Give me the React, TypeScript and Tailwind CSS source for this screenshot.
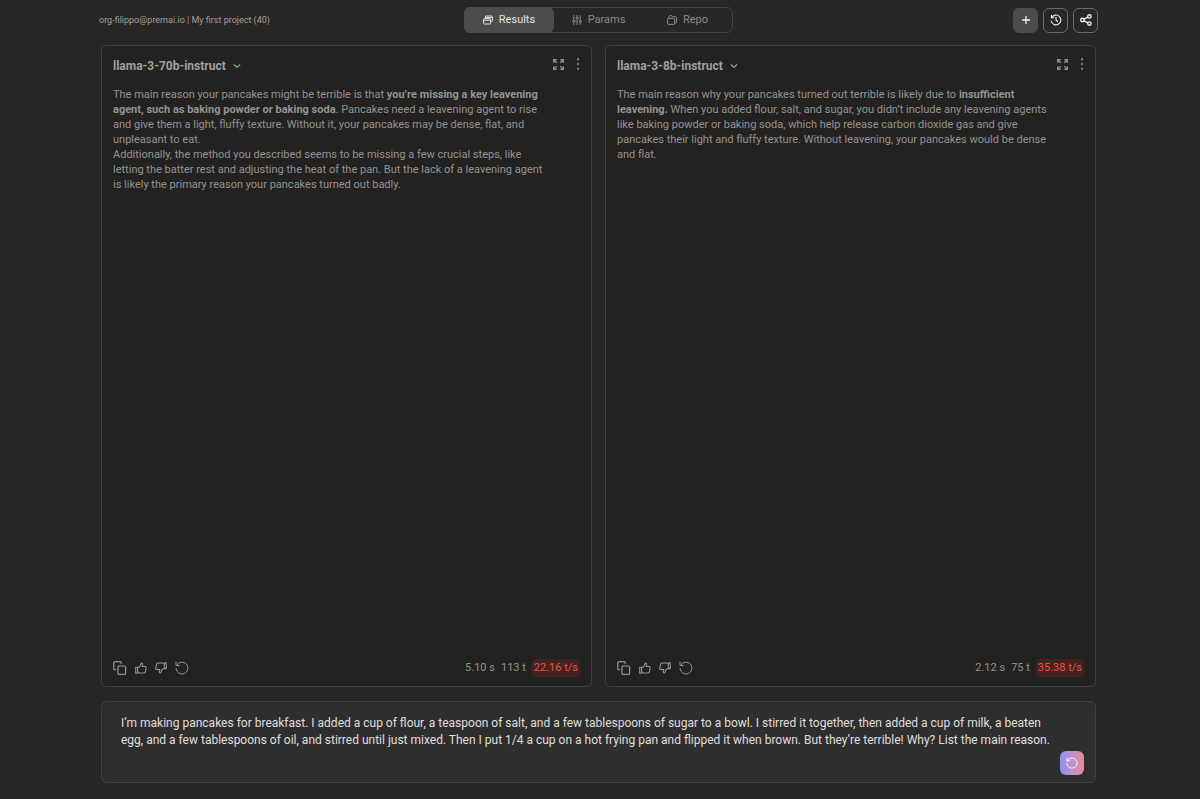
import type { ReactNode } from "react";

type IconProps = { className?: string };

function WindowsIcon({ className }: IconProps) {
  return (
    <svg viewBox="0 0 10 10" fill="none" stroke="currentColor" strokeLinejoin="round" className={className}>
      <path d="M2.4 3V1.9a.9.9 0 0 1 .9-.9h5.2a.9.9 0 0 1 .9.9v3.7a.9.9 0 0 1-.9.9h-.8" />
      <path d="M2.4 2.4h7" />
      <rect x=".6" y="3.6" width="7" height="5.4" rx=".9" />
      <path d="M.6 5.2h7" />
    </svg>
  );
}

function SlidersIcon({ className }: IconProps) {
  return (
    <svg viewBox="0 0 10 10" fill="none" stroke="currentColor" strokeLinecap="round" className={className}>
      <path d="M1.8.5v4M1.8 8v1.5M5 .5v1M5 5v4.5M8.2.5v4M8.2 8v1.5" />
      <circle cx="1.8" cy="6.3" r="1.1" />
      <circle cx="5" cy="3.1" r="1.1" />
      <circle cx="8.2" cy="6.3" r="1.1" />
    </svg>
  );
}

function FolderIcon({ className }: IconProps) {
  return (
    <svg viewBox="0 0 10 10" fill="none" stroke="currentColor" strokeLinejoin="round" className={className}>
      <path d="M.6 8.5V4.1a.8.8 0 0 1 .8-.8h5.4a.8.8 0 0 1 .8.8v4.4a.9.9 0 0 1-.9.9H1.5a.9.9 0 0 1-.9-.9Z" />
      <path d="M2 3.2V1.4a.8.8 0 0 1 .8-.8h1.6l1 1.1h3.1a.9.9 0 0 1 .9.9v4.6a.9.9 0 0 1-.9.9h-.8" />
    </svg>
  );
}

function PlusIcon({ className }: IconProps) {
  return (
    <svg viewBox="0 0 10 10" fill="none" stroke="currentColor" strokeWidth="1.3" className={className}>
      <path d="M5 1v8M1 5h8" />
    </svg>
  );
}

function HistoryIcon({ className }: IconProps) {
  return (
    <svg viewBox="0 0 12 12" fill="none" stroke="currentColor" strokeWidth="1.1" strokeLinecap="round" strokeLinejoin="round" className={className}>
      <path d="M1.5 1.4v2.4h2.4" />
      <path d="M1.7 3.6A4.9 4.9 0 1 1 1.2 7" />
      <path d="M6 3.4V6l1.6 1.6" />
    </svg>
  );
}

function ShareIcon({ className }: IconProps) {
  return (
    <svg viewBox="0 0 12 12" fill="none" stroke="currentColor" strokeWidth="1.4" className={className}>
      <circle cx="2.4" cy="6" r="1.7" />
      <circle cx="9.4" cy="2.4" r="1.7" />
      <circle cx="9.4" cy="9.6" r="1.7" />
      <path d="M4 5.2l3.9-2M4 6.8l3.9 2" />
    </svg>
  );
}

function ExpandIcon({ className }: IconProps) {
  return (
    <svg viewBox="0 0 12 12" fill="none" stroke="currentColor" strokeWidth="1.3" className={className}>
      <path d="M.7 4V.7H4M.7.7l3.4 3.4M8 .7h3.3V4M11.3.7L7.9 4.1M.7 8v3.3H4M.7 11.3l3.4-3.4M8 11.3h3.3V8M11.3 11.3L7.9 7.9" />
    </svg>
  );
}

function DotsIcon({ className }: IconProps) {
  return (
    <svg viewBox="0 0 12 12" fill="currentColor" className={className}>
      <circle cx="6" cy="1.2" r="1.1" />
      <circle cx="6" cy="6" r="1.1" />
      <circle cx="6" cy="10.8" r="1.1" />
    </svg>
  );
}

function ChevronIcon({ className }: IconProps) {
  return (
    <svg viewBox="0 0 10 10" fill="none" stroke="currentColor" strokeWidth="1.2" strokeLinecap="round" strokeLinejoin="round" className={className}>
      <path d="M2.2 3.8L5 6.4l2.8-2.6" />
    </svg>
  );
}

function CopyIcon({ className }: IconProps) {
  return (
    <svg viewBox="0 0 14 14" fill="none" stroke="currentColor" strokeWidth="1.2" strokeLinejoin="round" className={className}>
      <rect x="5" y="5" width="7.6" height="8.4" rx=".8" />
      <path d="M3 8.6H1.7a.9.9 0 0 1-.9-.9V1.6a.9.9 0 0 1 .9-.9h5.6a.9.9 0 0 1 .9.9V3" />
    </svg>
  );
}

function ThumbIcon({ className }: IconProps) {
  return (
    <svg viewBox="0 0 12 12" fill="none" stroke="currentColor" strokeWidth="1.1" strokeLinejoin="round" className={className}>
      <path d="M.7 5.4h1.9v5.8H.7z" />
      <path d="M2.6 5.9L5 4.2l1-2.6c.3-.7 1.7-.5 1.7.6l-.4 2.3h2.9c.7 0 1.1.5 1 1.2l-.8 4.2c-.1.7-.6 1.1-1.3 1.1H5l-2.4-1" />
    </svg>
  );
}

function RedoIcon({ className }: IconProps) {
  return (
    <svg viewBox="0 0 14 14" fill="none" stroke="currentColor" strokeLinecap="round" strokeLinejoin="round" className={className}>
      <path d="M1 1.2v3.4h3.4" />
      <path d="M1.6 4.4A6 6 0 1 1 1 7.6" />
    </svg>
  );
}

type Result = {
  model: string;
  time: string;
  tokens: string;
  speed: string;
  text: ReactNode;
};

const results: Result[] = [
  {
    model: "llama-3-70b-instruct",
    time: "5.10 s",
    tokens: "113 t",
    speed: "22.16 t/s",
    text: (
      <>
        <p>
          The main reason your pancakes might be terrible is that{" "}
          <strong className="font-bold">
            you’re missing a key leavening
            <br />
            agent, such as baking powder or baking soda
          </strong>
          . Pancakes need a leavening agent to rise
          <br />
          and give them a light, fluffy texture. Without it, your pancakes may be dense, flat, and
          <br />
          unpleasant to eat.
        </p>
        <p>
          Additionally, the method you described seems to be missing a few crucial steps, like
          <br />
          letting the batter rest and adjusting the heat of the pan. But the lack of a leavening agent
          <br />
          is likely the primary reason your pancakes turned out badly.
        </p>
      </>
    ),
  },
  {
    model: "llama-3-8b-instruct",
    time: "2.12 s",
    tokens: "75 t",
    speed: "35.38 t/s",
    text: (
      <p>
        The main reason why your pancakes turned out terrible is likely due to{" "}
        <strong className="font-bold">
          insufficient
          <br />
          leavening.
        </strong>{" "}
        When you added flour, salt, and sugar, you didn’t include any leavening agents
        <br />
        like baking powder or baking soda, which help release carbon dioxide gas and give
        <br />
        pancakes their light and fluffy texture. Without leavening, your pancakes would be dense
        <br />
        and flat.
      </p>
    ),
  },
];

const prompt =
  "I’m making pancakes for breakfast. I added a cup of flour, a teaspoon of salt, and a few tablespoons of sugar to a bowl. I stirred it together, then added a cup of milk, a beaten egg, and a few tablespoons of oil, and stirred until just mixed. Then I put 1/4 a cup on a hot frying pan and flipped it when brown. But they’re terrible! Why? List the main reason.";

function Header() {
  return (
    <header className="grid h-[26px] grid-cols-[1fr_auto_1fr] items-center">
      <p className="pt-px text-[9px] text-[#a09f9e]">org-filippo@premai.io | My first project (40)</p>
      <nav className="flex h-[26px] rounded-md border border-[#454443] text-[11px] text-[#8b8a89]">
        <button className="-my-px -ml-px flex w-[90px] items-center justify-center gap-1.5 rounded-md bg-[#4d4b4c] text-[#e4e3e3]">
          <WindowsIcon className="size-2.5" />
          Results
        </button>
        <button className="flex w-[89px] items-center justify-center gap-1.5">
          <SlidersIcon className="size-2.5" />
          Params
        </button>
        <button className="flex w-[89px] items-center justify-center gap-1.5">
          <FolderIcon className="size-2.5" />
          Repo
        </button>
      </nav>
      <div className="flex justify-end gap-[5px] text-[#f2f2f2]">
        <button aria-label="New" className="grid size-[25px] place-items-center rounded-md bg-[#4d4b4c]">
          <PlusIcon className="size-2.5" />
        </button>
        <button aria-label="History" className="grid size-[25px] place-items-center rounded-md border border-[#6b6a69]">
          <HistoryIcon className="size-3" />
        </button>
        <button aria-label="Share" className="grid size-[25px] place-items-center rounded-md border border-[#6b6a69]">
          <ShareIcon className="size-3" />
        </button>
      </div>
    </header>
  );
}

function ResultPanel({ model, time, tokens, speed, text }: Result) {
  return (
    <section className="flex flex-col rounded-md border border-[#42413f] bg-[#232220] px-[11px] pt-3 pb-[9px] text-[#949392]">
      <div className="flex h-4 items-center justify-between">
        <button className="flex items-center gap-1.5 text-xs font-bold text-[#a1a09f]">
          {model}
          <ChevronIcon className="size-2.5" />
        </button>
        <div className="-mr-1 flex items-center gap-2 self-start">
          <button aria-label="Expand">
            <ExpandIcon className="size-[11px]" />
          </button>
          <button aria-label="More">
            <DotsIcon className="size-3" />
          </button>
        </div>
      </div>
      <div className="mt-[13px] flex-1 text-[11px] leading-[15px]">{text}</div>
      <div className="flex items-center justify-between">
        <div className="flex items-center gap-2">
          <button aria-label="Copy">
            <CopyIcon className="size-[14px]" />
          </button>
          <button aria-label="Good answer">
            <ThumbIcon className="size-3" />
          </button>
          <button aria-label="Bad answer">
            <ThumbIcon className="size-3 rotate-180" />
          </button>
          <button aria-label="Regenerate">
            <RedoIcon className="size-[14px]" />
          </button>
        </div>
        <div className="flex items-center gap-1.5 text-[11px]">
          <span>{time}</span>
          <span>{tokens}</span>
          <span className="rounded-sm bg-[#43231f] px-0.5 leading-[18px] text-[#f0504f]">{speed}</span>
        </div>
      </div>
    </section>
  );
}

export default function App() {
  return (
    <div className="flex min-h-screen flex-col bg-[#282725] pt-[7px] pr-[102px] pb-4 pl-[99px] font-['Roboto',sans-serif]">
      <Header />
      <main className="mt-3 mr-0.5 ml-0.5 flex flex-1 flex-col gap-[14px]">
        <div className="grid flex-1 grid-cols-2 gap-[13px]">
          {results.map((result) => (
            <ResultPanel key={result.model} {...result} />
          ))}
        </div>
        <form className="flex h-[82px] rounded-md border border-[#42413f] bg-[#2e2e2e] pt-[13px] pr-[11px] pb-[7px] pl-[19px]">
          <textarea
            aria-label="Prompt"
            defaultValue={prompt}
            className="flex-1 resize-none overflow-hidden text-xs leading-[17px] text-[#e0dfdf] outline-none"
          />
          <button
            type="button"
            aria-label="Run again"
            className="grid size-6 place-items-center self-end rounded-md bg-linear-to-r from-[#8d92f0] to-[#e88a9c] text-white"
          >
            <RedoIcon className="size-3" />
          </button>
        </form>
      </main>
    </div>
  );
}
